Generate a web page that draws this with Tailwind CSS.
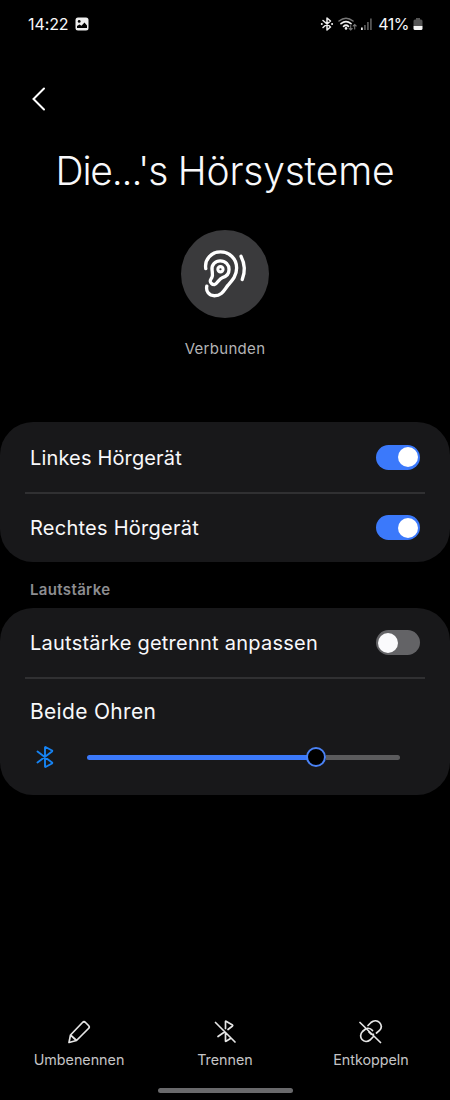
<!DOCTYPE html>
<html lang="de">
<head>
<meta charset="utf-8">
<title>Hörsysteme</title>
<script src="https://cdn.jsdelivr.net/npm/@tailwindcss/browser@4"></script>
</head>
<body class="bg-black">
<div class="flex h-[1100px] w-[450px] flex-col overflow-hidden bg-black font-['Inter','Liberation_Sans',sans-serif] text-[#f8f8fa]">
  <header class="flex h-12 shrink-0 items-center pl-[28px] pr-[27px]">
    <span class="text-[16px] tracking-[-0.1px]">14:22</span>
    <svg class="ml-[7px]" width="14" height="14" viewBox="0 0 14 14"><rect x=".5" y=".5" width="13" height="13" rx="2.500" fill="#eee"/><circle cx="4.200" cy="4.400" r="1.400" fill="#000"/><path d="M2 11V9l2.500-1.500 2 1.200L9.500 5.500 12 8.500V11z" fill="#000"/></svg>
    <div class="ml-auto flex items-center">
      <svg width="14" height="16" viewBox="0 0 14 16" fill="none" stroke="#eee" stroke-width="1.500" stroke-linejoin="round" stroke-linecap="round"><path d="M3 4.500l7.500 6.500L7 14V2l3.500 3L3 11.500"/><path d="M1.700 8h.2M12 8h.2" stroke-width="1.800"/></svg>
      <svg class="ml-[4px]" width="20" height="16" viewBox="0 0 20 16" fill="none" stroke-linecap="round"><path d="M1 5Q8-.7 15 5" stroke="#777" stroke-width="1.500"/><path d="M3 7.700Q8 3.500 13 7.700M5.500 10.300Q8 8.200 10.500 10.300" stroke="#eee" stroke-width="1.700"/><circle cx="8" cy="12.400" r="1.300" fill="#eee"/><path d="M12.700 9.500V14m-1.500-1.500 1.500 1.500 1.500-1.500M16.700 13V8.500M15.200 10l1.500-1.500L18.200 10" stroke="#777" stroke-width="1.100"/></svg>
      <svg class="ml-[2px]" width="13" height="14" viewBox="0 0 13 14"><path d="M1 10.500h1.800V13H1z" fill="#eee"/><path d="M4 8h1.800v5H4zM7 5h1.800v8H7zM10 1.500h1.800V13H10z" fill="#555"/></svg>
      <span class="ml-[5px] text-[16px] tracking-[-0.500px]">41%</span>
      <svg class="ml-[4px]" width="10" height="14" viewBox="0 0 10 14"><path d="M3 1h4v1.500h1Q9.500 2.500 9.500 4v5h-9V4Q.5 2.500 2 2.500h1z" fill="#555"/><path d="M.5 9h9v2.500Q9.500 13 8 13H2Q.5 13 .5 11.500z" fill="#f5f5f5"/></svg>
    </div>
  </header>
  <nav class="flex h-[102px] shrink-0 items-center pl-[31px]">
    <svg width="16" height="24" viewBox="0 0 16 24" fill="none" stroke="#fff" stroke-width="2" stroke-linecap="round"><path d="M13 1.500L2.500 12 13 22.500"/></svg>
  </nav>
  <section class="flex h-[272px] shrink-0 flex-col items-center">
    <h1 class="mt-[-3px] h-12 whitespace-nowrap text-[39px] font-light leading-[48px] tracking-[-0.200px]"><span class="tracking-[-1.200px]">Die...'s</span> Hörsysteme</h1>
    <div class="mt-[35px] mr-px size-[88px] rounded-full bg-[#3a3a3c]">
      <svg width="88" height="88" viewBox="0 0 87 87" fill="none" stroke="#fff" stroke-width="3.300" stroke-linecap="round" stroke-linejoin="round"><path d="M24.500 38.200C23 29 30 21.700 39 21.700C48 21.700 55 28.500 55 37.500C55 45.500 50.500 50 46.500 54.500C42.500 59.500 40.500 65 33 65C27.500 65 24.500 60.500 25.500 55.500"/><path d="M30 52.700C27.800 50.700 29 49.500 30.500 47C31.700 45 31 42.500 30.700 39.500C30 34 34 30.500 38.800 30.500C44 30.500 47.500 34.500 47.500 39C47.500 43.500 44.500 46 41 47C37.500 48 36 53.500 33 54C31.500 54 30.700 53.500 30 52.700Z"/><circle cx="39" cy="38.800" r="2.600" stroke-width="3"/><path d="M59.300 26Q65.200 37.500 60.500 49"/></svg>
    </div>
    <p class="mt-[20px] text-[15px] leading-[22px] tracking-[0.300px] text-[#b4b4b6]">Verbunden</p>
  </section>
  <section class="h-[140px] shrink-0 rounded-[33px] bg-[#18181a] px-[25px]">
    <div class="flex h-[72px] items-center justify-between border-b-2 border-[#303032] px-[5px]">
      <span class="pt-[2px] text-[20px] tracking-[0.150px]">Linkes Hörgerät</span>
      <span class="flex h-[25px] w-11 items-center justify-end rounded-full bg-[#3b79fb] pr-[2px]"><i class="size-5 rounded-full bg-white"></i></span>
    </div>
    <div class="flex h-[67px] items-center justify-between px-[5px]">
      <span class="pt-px text-[20px] tracking-[0.250px]">Rechtes Hörgerät</span>
      <span class="flex h-[25px] w-11 items-center justify-end rounded-full bg-[#3b79fb] pr-[2px]"><i class="size-5 rounded-full bg-white"></i></span>
    </div>
  </section>
  <h2 class="h-[46px] shrink-0 pl-[30px] pt-[17px] text-[15px] font-semibold leading-[22px] tracking-[0.350px] text-[#8d8d90]">Lautstärke</h2>
  <section class="h-[187px] shrink-0 rounded-[33px] bg-[#18181a] px-[25px]">
    <div class="flex h-[71px] items-center justify-between border-b-2 border-[#303032] px-[5px]">
      <span class="whitespace-nowrap pt-px text-[20px] tracking-[0.240px]">Lautstärke getrennt anpassen</span>
      <span class="flex h-[25px] w-11 items-center rounded-full bg-[#636366] pl-[2px]"><i class="size-5 rounded-full bg-[#fafafc]"></i></span>
    </div>
    <div class="px-[5px] pt-[18px] text-[21px] leading-[30px] tracking-[0.320px]">Beide Ohren</div>
    <div class="mt-[18px] flex h-6 items-center pl-[10px]">
      <svg width="20" height="24" viewBox="0 0 20 24" fill="none" stroke="#1683f3" stroke-width="1.900" stroke-linecap="round" stroke-linejoin="round"><path d="M2.500 6.500L17 17.500Q17.500 18 17 18.500L10.500 22Q10 22 10 21.500V2.500Q10 2 10.500 2L17 5.500Q17.500 6 17 6.500L2.500 17.500"/></svg>
      <div class="ml-[32px] flex h-5 w-[313px] items-center">
        <div class="h-[5px] w-[221px] rounded-l-full bg-[#3b79fb]"></div>
        <div class="-ml-[2px] size-5 shrink-0 rounded-full border-[2.500px] border-[#4a82f5] bg-black"></div>
        <div class="h-[5px] flex-1 rounded-r-full bg-[#5b5b5d]"></div>
      </div>
    </div>
  </section>
  <footer class="mt-auto shrink-0 pb-[7px]">
    <div class="grid grid-cols-[158px_134px_158px] text-[14.300px] leading-5 text-[#c4c4c6]">
      <div class="flex flex-col items-center gap-[5px]">
        <svg width="26" height="26" viewBox="0 0 26 26" fill="none" stroke="#e5e5e5" stroke-width="1.700" stroke-linejoin="round"><path d="M3 23.500L4.500 16 16.500 3.500Q18 2 19.500 3.500L22.500 6.500Q24 8 22.500 9.500L10.500 21.500ZM4.500 16L10.500 21.500"/></svg>
        <span>Umbenennen</span>
      </div>
      <div class="flex flex-col items-center gap-[5px]">
        <svg width="26" height="26" viewBox="0 0 26 26" fill="none" stroke="#e5e5e5" stroke-width="1.700" stroke-linejoin="round" stroke-linecap="round"><path d="M3.500 3.500L23 23M13.500 9.500V2.500Q13.500 2 14 2.200L20.500 6Q21 6.500 20.500 7L16 10.500M12.500 13L6 17.500M13.500 14V22Q13.500 22.500 14 22.300L18.500 19.500"/></svg>
        <span>Trennen</span>
      </div>
      <div class="flex flex-col items-center gap-[5px]">
        <svg class="mr-[2px]" width="26" height="26" viewBox="0 0 26 26" fill="none" stroke="#e5e5e5" stroke-width="1.700" stroke-linecap="round"><path d="M3 3.500L23.500 23.500M11 6.500L14 3.500C17 .8 20.500 1.500 22.500 3.500C24.800 6 24.800 9 22.500 11.500L19.500 14M16.500 15.300C14.500 15.500 13 14.500 12 13M8.500 10L5.500 12.500C3 15 3.200 18.500 5 20.500C7.200 23 10.500 23 13 21L16 18M10.500 9.300Q13.500 9 15.500 11.500"/></svg>
        <span>Entkoppeln</span>
      </div>
    </div>
    <div class="mx-auto mt-[18px] h-[5px] w-[135px] rounded-full bg-[#69696b]"></div>
  </footer>
</div>
</body>
</html>
